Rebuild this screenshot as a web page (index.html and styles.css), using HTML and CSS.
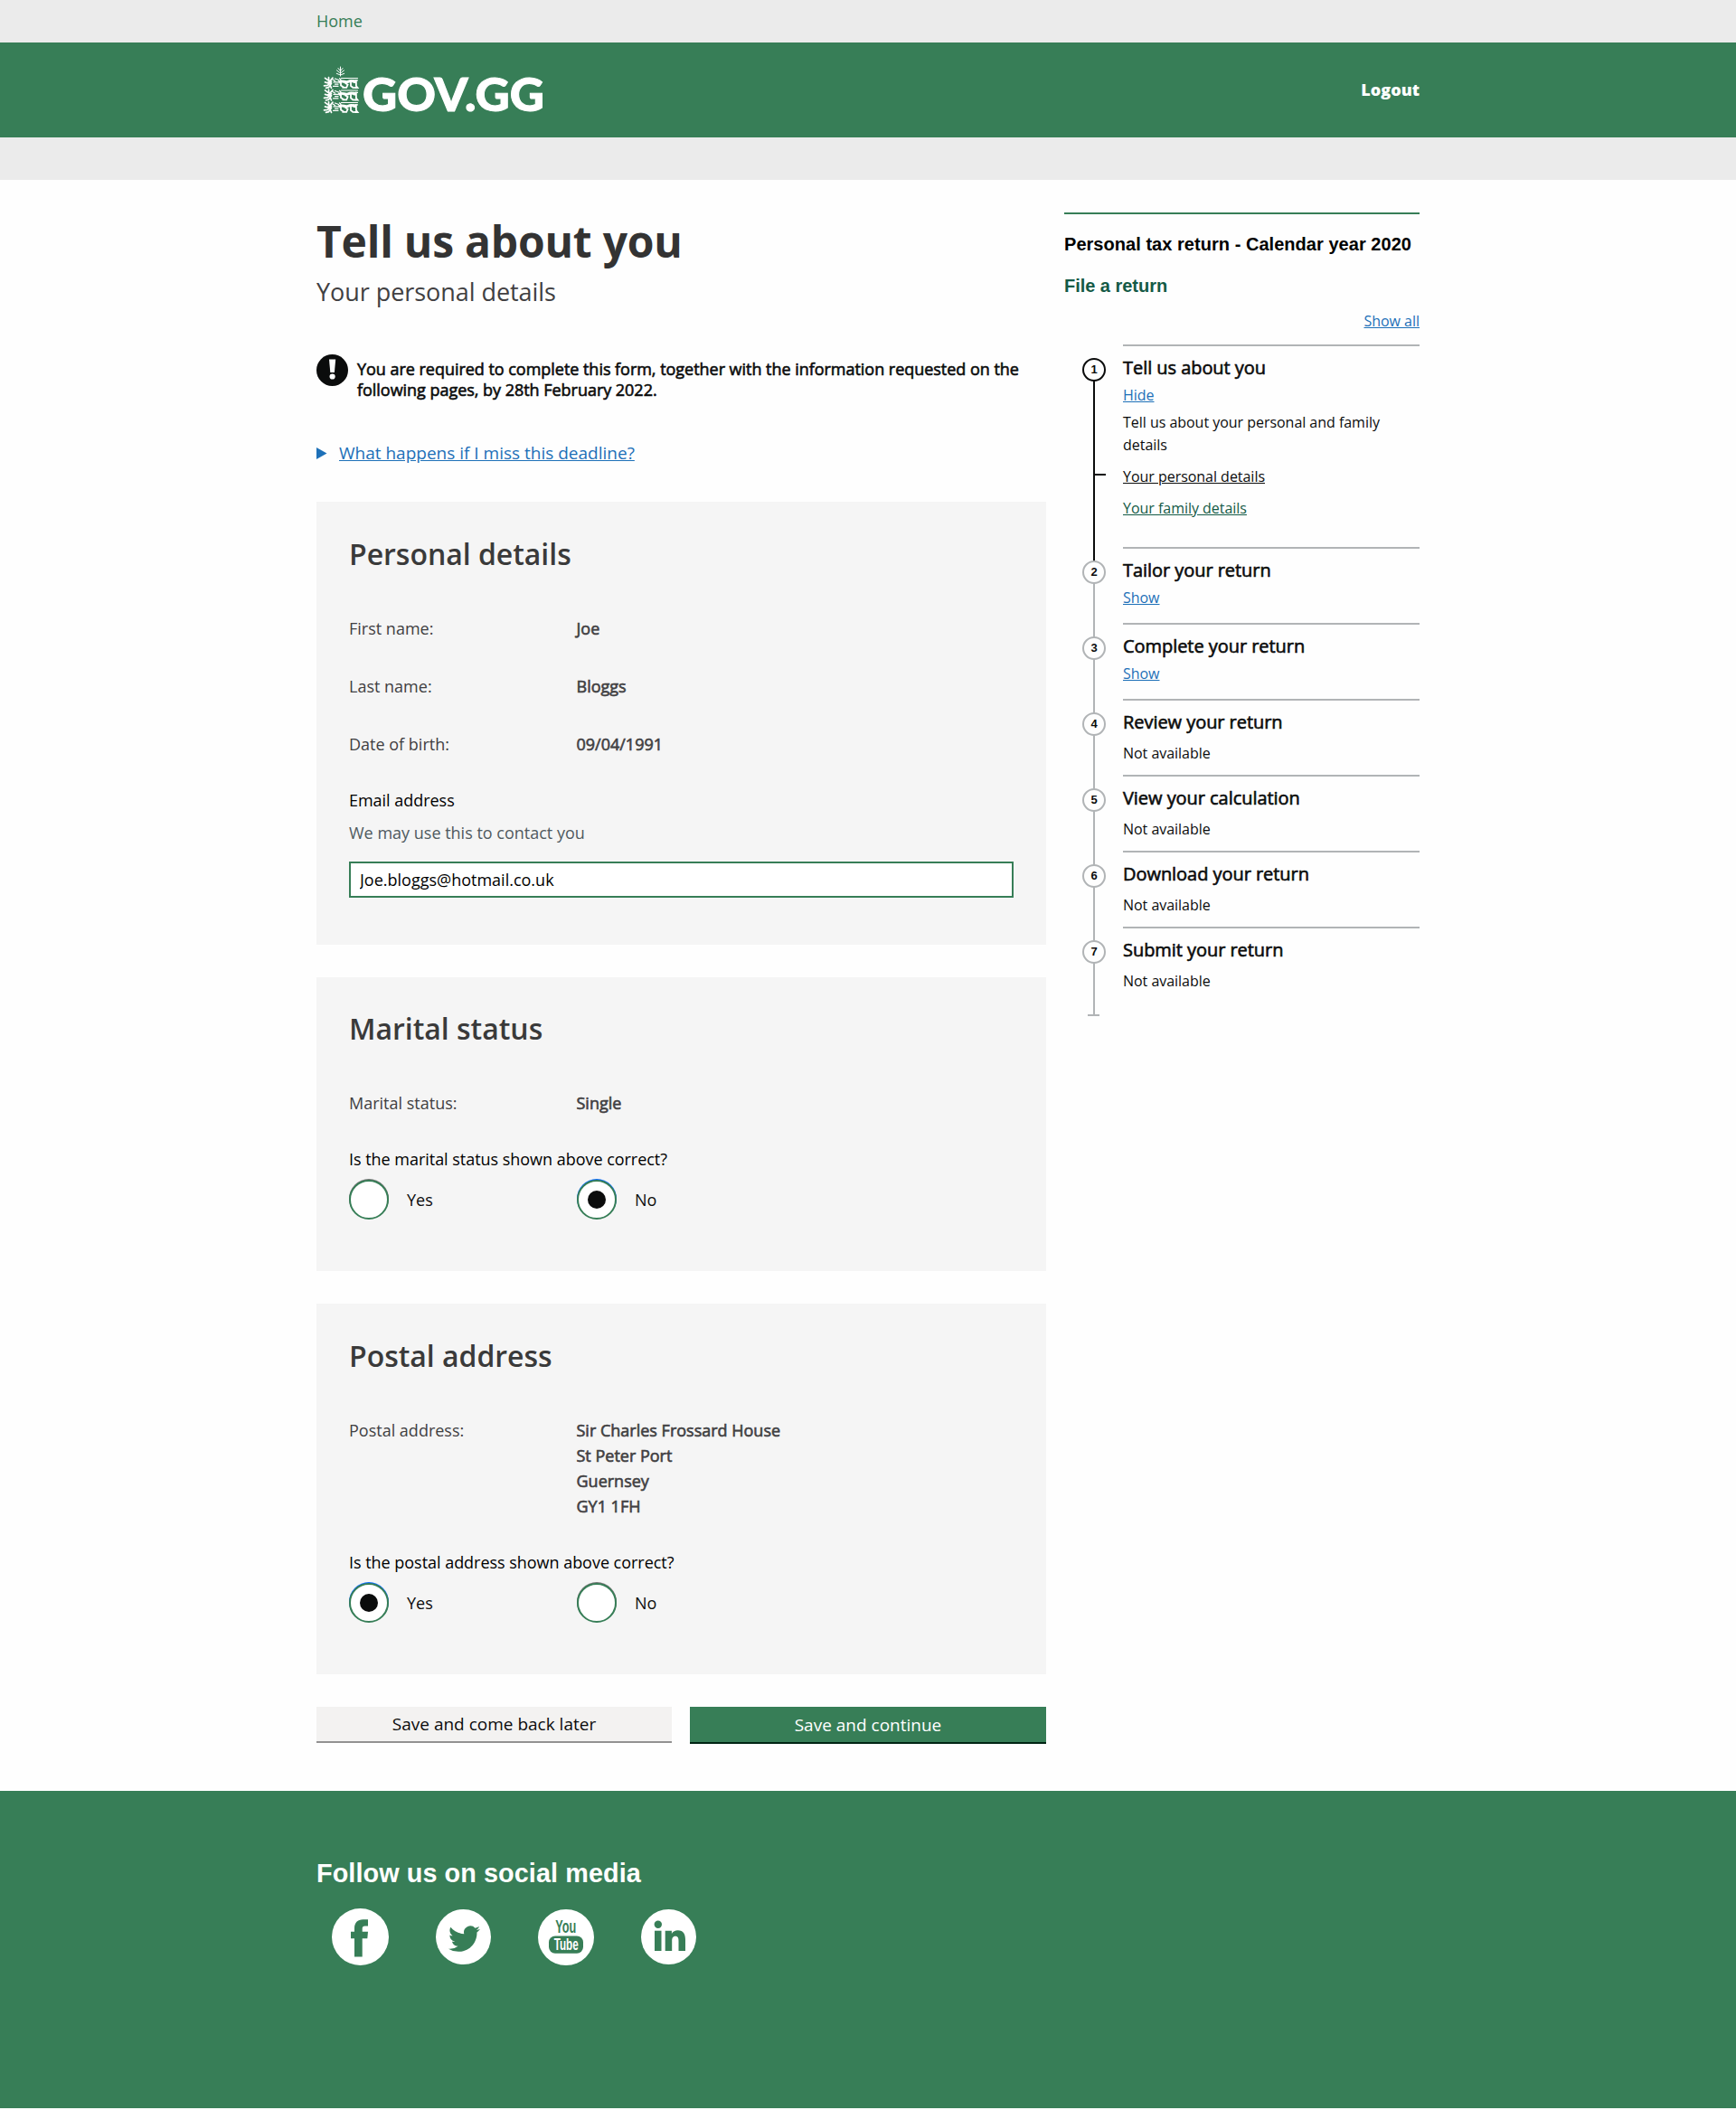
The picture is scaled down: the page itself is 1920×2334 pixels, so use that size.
FILE: index.html
```html
<!DOCTYPE html>
<html lang="en">
<head>
<meta charset="utf-8">
<title>Tell us about you - GOV.GG</title>
<link rel="stylesheet" href="styles.css">
</head>
<body>
<nav class="topbar"><div class="container"><a href="#">Home</a></div></nav>

<header class="header">
  <div class="container header-row">
    <svg class="logo" width="260" height="105" viewBox="0 0 260 105" role="img" aria-label="GOV.GG">
      <defs>
        <g id="lion">
          <path d="M1 .8 4 3.200M5 0 5.200 4M9.500.6 5.400 5.400 3 6M1 5.400l4 1.400M0 9.300l4-.4 4-4.200M2 11.800l3-.6 3-4.400M7 9.500l1 2.400" stroke-width="1.700"/>
          <path d="M9.500 2.500l2.500 1.500M12 1.500l4 1.500M10.500 5.400h5M12 7.600h3.500M10 9.800h5.500M17 1.400c2 1 2 3 .5 5" stroke-width="1.300"/>
          <path d="M17 4.800c3.500-1.600 6 1.400 9.500 0s5-1 7 .3" stroke-width="3"/>
          <path d="M19 1h18M37 3.400h-5" stroke-width="1.100"/>
          <path d="M18.500 6v3l3 2M23.500 6.500l2.600 1.600-1.400 3.300h-4M29.500 5v4.500l2.500 2M35.400 3.500v6l1.600 2h-3.500" stroke-width="1.800"/>
        </g>
      </defs>
      <g fill="none" stroke="#fff" stroke-linecap="round">
        <path d="M26.500 37V27M26.500 36l-4.200-1.700M26.500 36l4.200-1.700M26.500 34l-4-3.200M26.500 34l4-3.200M26.500 31.500l-2.500-3M26.500 31.500l2.500-3" stroke-width="1"/>
        <use href="#lion" x="8.500" y="38.500"/>
        <use href="#lion" x="8.500" y="52"/>
        <use href="#lion" x="8.500" y="65.500"/>
      </g>
      <text class="logo-text" x="51" y="75.500" textLength="201" lengthAdjust="spacingAndGlyphs">GOV.GG</text>
    </svg>
    <a class="logout" href="#">Logout</a>
  </div>
</header>
<div class="subbar"></div>

<div class="container layout">
  <main class="main">
    <h1 class="title">Tell us about you</h1>
    <p class="lead">Your personal details</p>

    <div class="alert">
      <svg class="alert-icon" width="35" height="35" viewBox="0 0 35 35" aria-hidden="true">
        <circle cx="17.500" cy="17.500" r="17.500" fill="#0b0c0c"/>
        <path d="M14 5.500h7.200l-1.300 14.500h-4.600z" fill="#fefefe"/>
        <circle cx="17.600" cy="24.500" r="3.100" fill="#fefefe"/>
      </svg>
      <p class="alert-text faux-bold">You are required to complete this form, together with the information requested on the following pages, by 28th February 2022.</p>
    </div>

    <div class="disclosure">
      <svg width="12" height="13" viewBox="0 0 12 13" aria-hidden="true"><path d="M0 0 11.500 6.500 0 13z" fill="#1d70b8"/></svg>
      <a href="#">What happens if I miss this deadline?</a>
    </div>

    <section class="panel personal">
      <h2>Personal details</h2>
      <dl class="facts">
        <dt>First name:</dt><dd class="faux-bold">Joe</dd>
        <dt>Last name:</dt><dd class="faux-bold">Bloggs</dd>
        <dt>Date of birth:</dt><dd class="faux-bold">09/04/1991</dd>
      </dl>
      <label class="question" for="email">Email address</label>
      <p class="hint">We may use this to contact you</p>
      <input class="field" id="email" type="text" value="Joe.bloggs@hotmail.co.uk">
    </section>

    <section class="panel">
      <h2>Marital status</h2>
      <dl class="facts">
        <dt>Marital status:</dt><dd class="faux-bold">Single</dd>
      </dl>
      <p class="question">Is the marital status shown above correct?</p>
      <div class="radios">
        <label class="radio"><span class="dial"></span>Yes</label>
        <label class="radio"><span class="dial checked"></span>No</label>
      </div>
    </section>

    <section class="panel postal">
      <h2>Postal address</h2>
      <dl class="facts">
        <dt>Postal address:</dt>
        <dd class="faux-bold">Sir Charles Frossard House<br>St Peter Port<br>Guernsey<br>GY1 1FH</dd>
      </dl>
      <p class="question">Is the postal address shown above correct?</p>
      <div class="radios">
        <label class="radio"><span class="dial checked"></span>Yes</label>
        <label class="radio"><span class="dial"></span>No</label>
      </div>
    </section>

    <div class="actions">
      <button class="button secondary" type="button">Save and come back later</button>
      <button class="button primary" type="button">Save and continue</button>
    </div>
  </main>

  <aside class="sidebar">
    <h2 class="side-title">Personal tax return - Calendar year 2020</h2>
    <h3 class="side-link"><a href="#">File a return</a></h3>
    <div class="show-all"><a href="#">Show all</a></div>
    <ol class="steps">
      <li class="step active">
        <span class="marker">1</span>
        <h4 class="faux-bold">Tell us about you</h4>
        <a class="toggle" href="#">Hide</a>
        <p class="step-text">Tell us about your personal and family details</p>
        <ul class="pages">
          <li class="current"><a href="#">Your personal details</a></li>
          <li><a href="#">Your family details</a></li>
        </ul>
      </li>
      <li class="step"><span class="marker">2</span><h4 class="faux-bold">Tailor your return</h4><a class="toggle" href="#">Show</a></li>
      <li class="step"><span class="marker">3</span><h4 class="faux-bold">Complete your return</h4><a class="toggle" href="#">Show</a></li>
      <li class="step"><span class="marker">4</span><h4 class="faux-bold">Review your return</h4><p class="status">Not available</p></li>
      <li class="step"><span class="marker">5</span><h4 class="faux-bold">View your calculation</h4><p class="status">Not available</p></li>
      <li class="step"><span class="marker">6</span><h4 class="faux-bold">Download your return</h4><p class="status">Not available</p></li>
      <li class="step last"><span class="marker">7</span><h4 class="faux-bold">Submit your return</h4><p class="status">Not available</p></li>
    </ol>
  </aside>
</div>

<footer class="footer">
  <div class="container">
    <h2>Follow us on social media</h2>
    <div class="social">
      <svg width="63" height="63" viewBox="0 0 63 63" role="img" aria-label="Facebook">
        <circle cx="31.500" cy="31.500" r="31.500" fill="#fff"/>
        <path d="M25 53.500V33.300H21V25.700H25V22c0-6 3.500-9.700 9.500-9.700H40V19.500H36.700c-2.200 0-3 1-3 3V25.700H40L39.300 33.300H33.700V53.500Z" fill="#377e57"/>
      </svg>
      <svg width="61" height="61" viewBox="0 0 61 61" role="img" aria-label="Twitter">
        <circle cx="30.500" cy="30.500" r="30.500" fill="#fff"/>
        <path transform="translate(14 15.100) scale(1.460)" d="M24 4.557a9.830 9.830 0 0 1-2.828.775 4.932 4.932 0 0 0 2.165-2.724 9.864 9.864 0 0 1-3.127 1.195 4.916 4.916 0 0 0-8.384 4.482C7.691 8.094 4.066 6.130 1.640 3.161a4.822 4.822 0 0 0-.666 2.475c0 1.710.87 3.213 2.188 4.096a4.904 4.904 0 0 1-2.228-.616v.061a4.923 4.923 0 0 0 3.946 4.827 4.996 4.996 0 0 1-2.212.085 4.936 4.936 0 0 0 4.604 3.417 9.867 9.867 0 0 1-6.102 2.105c-.39 0-.779-.023-1.170-.067a13.995 13.995 0 0 0 7.557 2.209c9.053 0 13.998-7.496 13.998-13.985 0-.21 0-.42-.015-.63A9.935 9.935 0 0 0 24 4.590z" fill="#377e57"/>
      </svg>
      <svg width="62" height="62" viewBox="0 0 62 62" role="img" aria-label="YouTube">
        <circle cx="31" cy="31" r="31" fill="#fff"/>
        <rect x="12" y="29.500" width="38" height="19.300" rx="7" fill="#377e57"/>
        <text class="you" x="19.300" y="26.300" textLength="23" lengthAdjust="spacingAndGlyphs" fill="#377e57">You</text>
        <text class="tube" x="17.700" y="45.300" textLength="27" lengthAdjust="spacingAndGlyphs" fill="#fff">Tube</text>
      </svg>
      <svg width="61" height="61" viewBox="0 0 61 61" role="img" aria-label="LinkedIn">
        <circle cx="30.500" cy="30.500" r="30.500" fill="#fff"/>
        <g fill="#377e57"><circle cx="18.800" cy="16.800" r="4.200"/><rect x="15" y="23.700" width="7.500" height="22.300"/>
        <path d="M26.700 23.700h7.200v3.200c1.400-2.400 3.800-3.700 6.800-3.700 6.300 0 8.300 4.300 8.300 10.300V46h-7.500V35c0-3-.5-5.300-3.500-5.300s-3.800 2.300-3.800 5.300v11h-7.500z"/></g>
      </svg>
    </div>
  </div>
</footer>
</body>
</html>
```
FILE: styles.css
```css
* { box-sizing: border-box; margin: 0; padding: 0; }

body {
  background: #fefefe;
  color: #0b0c0c;
  font: 18px/28px "Open Sans", sans-serif;
}

.container { width: 1220px; margin: 0 auto; }
.faux-bold { -webkit-text-stroke: 0.6px currentColor; }

.topbar { height: 47px; background: #ebebeb; }
.topbar a { display: block; line-height: 46px; color: #377e57; text-decoration: none; }

.header { height: 105px; background: #377e57; }
.header-row { display: flex; justify-content: space-between; }
.logo { display: block; }
.logo-text { font: 900 52px Lato, sans-serif; fill: #fff; stroke: #fff; stroke-width: 1px; }
.logout { color: #fff; font-weight: 800; line-height: 105px; text-decoration: none; }
.subbar { height: 47px; background: #ebebeb; }

.layout {
  display: grid;
  grid-template-columns: 807px 393px;
  column-gap: 20px;
  height: 1782px;
}

.main { padding-top: 38px; }
.title { font-size: 48px; line-height: 60px; font-weight: 700; letter-spacing: -0.22px; color: #333; }
.lead { margin-top: 8px; font-size: 27px; line-height: 36px; letter-spacing: -0.05px; color: #414042; }

.alert { display: flex; gap: 10px; height: 51px; margin-top: 51px; }
.alert-icon { flex: none; }
.alert-text { padding-top: 5px; line-height: 23px; letter-spacing: -0.03px; }

.disclosure { display: flex; align-items: center; gap: 13px; height: 26px; margin: 45px 0 41px; font-size: 19px; line-height: 26px; }
.disclosure a { color: #1d70b8; text-decoration: underline; }

.panel { padding: 35px 36px 57px; margin-bottom: 36px; background: #f5f5f5; }
.panel h2 { font-size: 32px; line-height: 44px; font-weight: 600; letter-spacing: -0.03px; color: #3a3a3a; }
.personal { padding-top: 36px; padding-bottom: 52px; }
.postal { padding-top: 36px; }

.facts { display: grid; grid-template-columns: 251.5px 1fr; row-gap: 36px; margin-top: 46px; color: #414042; }
.question { display: block; margin-top: 34px; letter-spacing: -0.03px; color: #000; }
.hint { margin-top: 8px; color: #505a5f; }
.field {
  display: block;
  width: 100%;
  height: 40px;
  margin-top: 18px;
  padding: 0 10px;
  border: 2px solid #377e57;
  background: #fff;
  font: 18px "Open Sans", sans-serif;
  color: #000;
}

.radios { display: grid; grid-template-columns: 252px 1fr; margin-top: 8px; }
.radio { display: flex; align-items: center; gap: 20px; height: 45px; line-height: 48px; }
.dial {
  display: grid;
  place-items: center;
  width: 44px;
  height: 44px;
  margin-top: 1px;
  border: 2px solid #377e57;
  border-radius: 50%;
  background: #fff;
  box-shadow: 0 -1px 0 #767676;
}
.checked { box-shadow: 0 -1px 0 #0d6efd; }
.checked::after { content: ""; width: 20px; height: 20px; border-radius: 50%; background: #0b0c0c; }

.actions { display: grid; grid-template-columns: 393px 394px; align-items: start; gap: 20px; }
.button { border: 0; font: 19px/36px "Open Sans", sans-serif; }
.secondary { height: 40px; background: #f3f2f1; border-bottom: 2px solid #929191; color: #0b0c0c; }
.primary { height: 41px; background: #377e57; border-bottom: 2px solid #002413; color: #fff; }

.sidebar { margin-top: 36px; border-top: 2px solid #377e57; height: 900px; font-size: 16px; line-height: 24px; letter-spacing: -0.03px; }
.side-title { margin-top: 18px; font: 700 20px/30px "Liberation Sans", sans-serif; letter-spacing: 0.04px; color: #000; white-space: nowrap; }
.side-link { margin-top: 16px; font: 700 20px/30px "Liberation Sans", sans-serif; }
.side-link a { color: #145a46; text-decoration: none; }
.show-all { margin: 12px 0 14px; text-align: right; }
.show-all a, .toggle { color: #1d70b8; }

.steps { list-style: none; padding-left: 65px; }
.step { position: relative; height: 84px; padding-top: 9px; border-top: 2px solid #b1b4b6; }
.active { height: 224px; }
.step h4 { font-size: 20px; line-height: 30px; font-weight: 400; letter-spacing: -0.05px; }
.step .toggle { display: block; margin-top: 3px; }
.status { margin-top: 7px; }
.step-text { margin-top: 6px; line-height: 25px; }
.pages { list-style: none; margin-top: 10px; }
.pages li { position: relative; margin-bottom: 11px; }
.pages a { color: #145a46; }
.pages .current a { color: #0b0c0c; }

/* Vertical track joining the numbered markers */
.step::before {
  content: "";
  position: absolute;
  left: -33px;
  top: 26px;
  width: 2px;
  height: 100%;
  background: #b1b4b6;
}
.active::before { background: #0b0c0c; }
.last::before { height: 70px; }
.last::after {
  content: "";
  position: absolute;
  left: -39px;
  top: 95px;
  width: 13px;
  height: 2px;
  background: #b1b4b6;
}
.current::before {
  content: "";
  position: absolute;
  left: -32px;
  top: 9px;
  width: 13px;
  height: 2px;
  background: #0b0c0c;
}
.marker {
  position: absolute;
  z-index: 1;
  left: -45px;
  top: 13px;
  width: 26px;
  height: 26px;
  border: 2px solid #b1b4b6;
  border-radius: 50%;
  background: #fefefe;
  font: 700 13px/22px "Liberation Sans", sans-serif;
  text-align: center;
}
.active .marker { border-color: #0b0c0c; }

.footer { height: 351px; padding-top: 72px; background: #377e57; color: #fff; }
.footer h2 { font: 700 28.800px/38px "Liberation Sans", sans-serif; letter-spacing: 0.08px; }
.social { display: flex; align-items: center; gap: 52px; margin: 20px 0 0 17px; }
.you, .tube { font: 700 20px "Liberation Sans Narrow", "Liberation Sans", sans-serif; }
.tube { font-size: 18.500px; }
```
